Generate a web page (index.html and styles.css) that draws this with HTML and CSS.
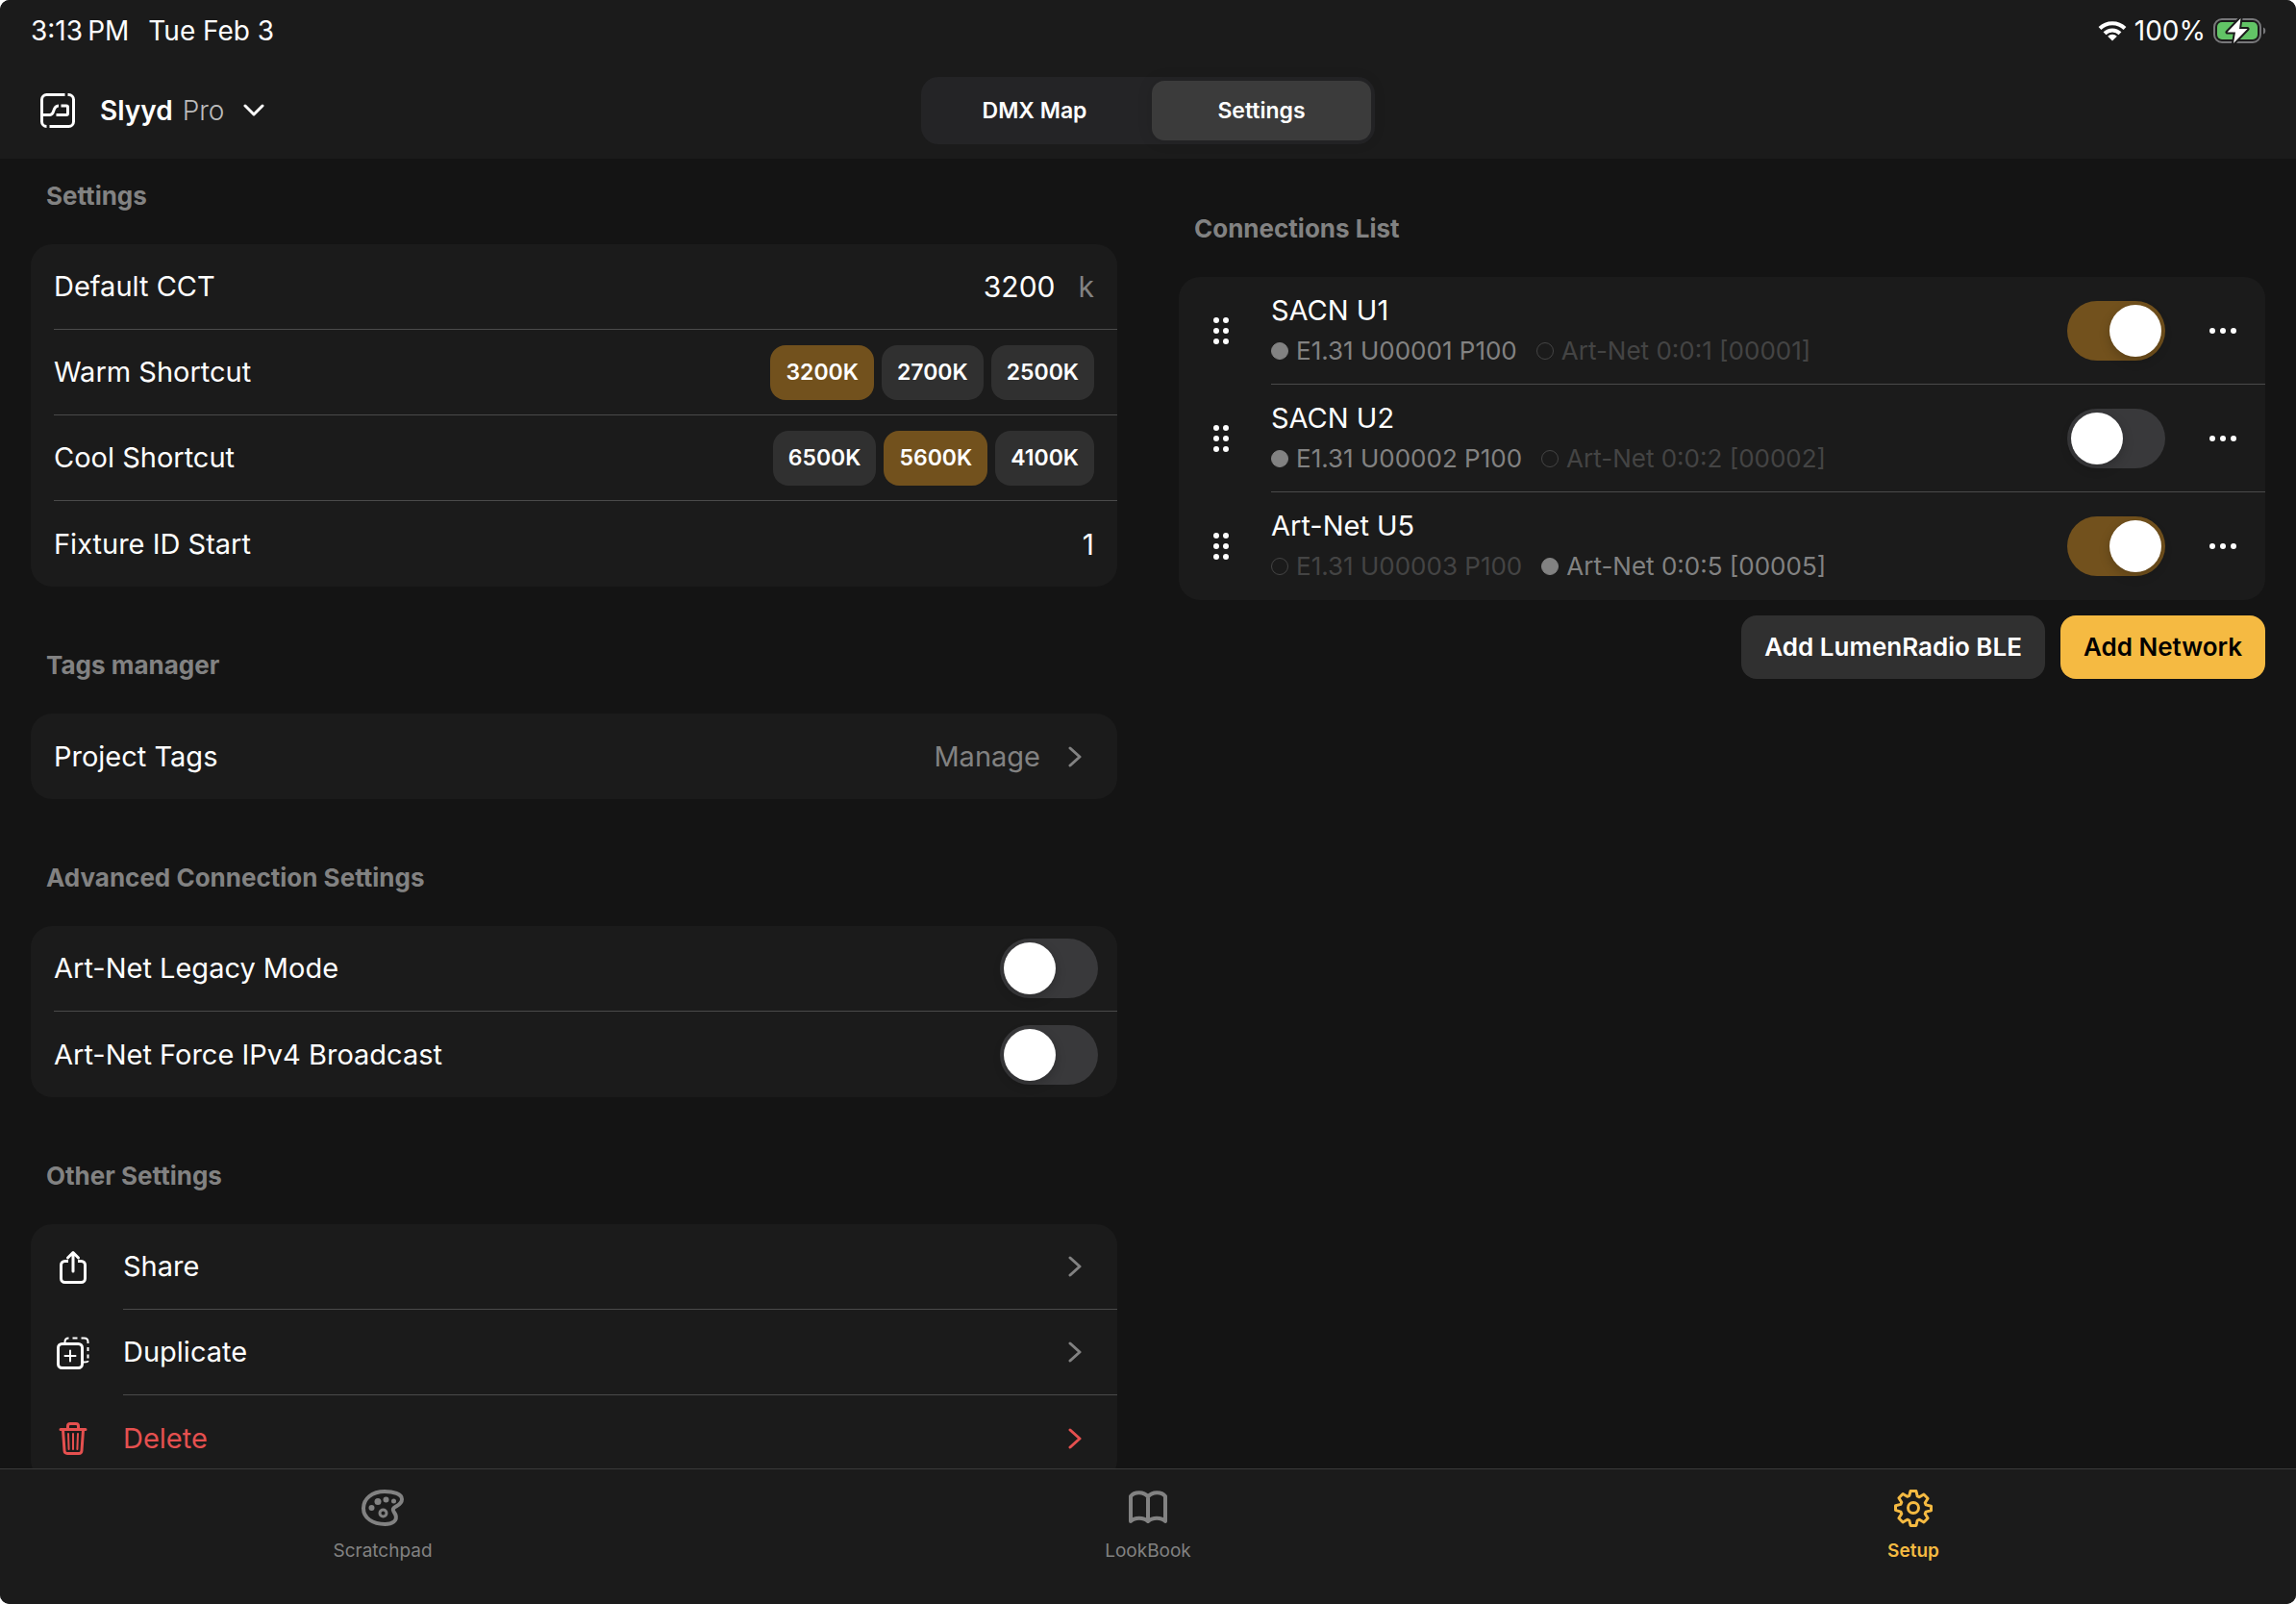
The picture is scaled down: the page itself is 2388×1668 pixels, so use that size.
FILE: index.html
```html
<!DOCTYPE html>
<html lang="en">
<head>
<meta charset="utf-8">
<meta name="viewport" content="width=device-width, initial-scale=1">
<title>Slyyd Pro – Setup</title>
<link rel="stylesheet" href="styles.css">
</head>
<body>
<svg class="defs" aria-hidden="true">
  <symbol id="chevron" viewBox="0 0 16 22"><path d="M3 2l10 9-10 9" fill="none" stroke="currentColor" stroke-width="3" stroke-linecap="round" stroke-linejoin="round"/></symbol>
  <symbol id="grip" viewBox="0 0 16 28"><g fill="currentColor"><circle cx="3" cy="3" r="3"/><circle cx="13" cy="3" r="3"/><circle cx="3" cy="14" r="3"/><circle cx="13" cy="14" r="3"/><circle cx="3" cy="25" r="3"/><circle cx="13" cy="25" r="3"/></g></symbol>
  <symbol id="more" viewBox="0 0 28 6"><g fill="currentColor"><circle cx="3" cy="3" r="3"/><circle cx="14" cy="3" r="3"/><circle cx="25" cy="3" r="3"/></g></symbol>
</svg>
<div class="app">
  <header class="top">
    <div class="status">
      <div class="status-left"><span>3:13&#8201;PM</span><span>Tue Feb 3</span></div>
      <div class="status-right">
        <svg class="wifi" width="30" height="22" viewBox="0 0 30 22" aria-hidden="true"><g fill="none" stroke="#fff" stroke-width="4"><path d="M2 8.500a18.500 18.500 0 0 1 26 0"/><path d="M7 13.700a11.500 11.500 0 0 1 16 0"/></g><path d="M15 21.500l-4.800-4.800a7 7 0 0 1 9.600 0z" fill="#fff"/></svg>
        <span>100%</span>
        <svg class="battery" width="56" height="30" viewBox="0 0 56 30" aria-hidden="true"><rect x="1" y="3" width="48" height="24" rx="8" fill="none" stroke="#77777a" stroke-width="2"/><rect x="4" y="6" width="42" height="18" rx="5" fill="#62c466"/><path d="M52 11.500c3 .8 3 6.200 0 7z" fill="#77777a"/><path d="M28.500 2L14.500 16.500h8.500L21 28l14.500-15H27z" fill="#fff" stroke="#1b1b1b" stroke-width="4" stroke-linejoin="round" paint-order="stroke"/></svg>
      </div>
    </div>
    <div class="nav">
      <button class="project" type="button">
        <svg width="36" height="36" viewBox="0 0 36 36" fill="none" stroke="#fff" stroke-width="3" aria-hidden="true"><path d="M25.500 1.500H6.500a5 5 0 0 0-5 5v23a5 5 0 0 0 5 5"/><path d="M28.500 1.500h1a5 5 0 0 1 5 5v23a5 5 0 0 1-5 5H9.500"/><path d="M1.500 22.500h8.500c5.500 0 2-9.500 9-9.500"/><path d="M21.500 13H27q1.500 0 1.500 1.500v6.500q0 1.500-1.500 1.500H16.500"/></svg>
        <strong>Slyyd</strong> <span class="plan">Pro</span>
        <svg width="22" height="14" viewBox="0 0 22 14" aria-hidden="true"><path d="M2 2l9 9 9-9" fill="none" stroke="#fff" stroke-width="3" stroke-linecap="round" stroke-linejoin="round"/></svg>
      </button>
      <div class="segmented">
        <button type="button" class="segment">DMX Map</button>
        <button type="button" class="segment selected">Settings</button>
      </div>
    </div>
  </header>

  <main class="content">
    <div class="column">
      <section class="group">
        <h2>Settings</h2>
        <div class="card">
          <div class="row"><label for="cct">Default CCT</label><span class="value"><input id="cct" class="field" type="text" value="3200"><span class="unit">k</span></span></div>
          <div class="row"><span>Warm Shortcut</span><span class="chips"><button type="button" class="chip on">3200K</button><button type="button" class="chip">2700K</button><button type="button" class="chip">2500K</button></span></div>
          <div class="row"><span>Cool Shortcut</span><span class="chips"><button type="button" class="chip">6500K</button><button type="button" class="chip on">5600K</button><button type="button" class="chip">4100K</button></span></div>
          <div class="row"><label for="fid">Fixture ID Start</label><span class="value"><input id="fid" class="field" type="text" value="1"></span></div>
        </div>
      </section>
      <section class="group">
        <h2>Tags manager</h2>
        <div class="card">
          <button type="button" class="row link"><span>Project Tags</span><span class="trail">Manage<svg class="chev"><use href="#chevron"/></svg></span></button>
        </div>
      </section>
      <section class="group">
        <h2>Advanced Connection Settings</h2>
        <div class="card">
          <div class="row switch-row"><label for="legacy">Art-Net Legacy Mode</label><input id="legacy" class="toggle" type="checkbox"></div>
          <div class="row switch-row"><label for="ipv4">Art-Net Force IPv4 Broadcast</label><input id="ipv4" class="toggle" type="checkbox"></div>
        </div>
      </section>
      <section class="group">
        <h2>Other Settings</h2>
        <div class="card">
          <div class="item">
            <svg class="item-icon" width="36" height="36" viewBox="0 0 36 36" fill="none" stroke="currentColor" stroke-width="3" stroke-linecap="round" stroke-linejoin="round" aria-hidden="true"><path d="M13 11.500H9.500a4 4 0 0 0-4 4v14a4 4 0 0 0 4 4h17a4 4 0 0 0 4-4v-14a4 4 0 0 0-4-4H23" stroke-linecap="butt"/><path d="M18 22V3M12.500 8L18 2.500 23.500 8"/></svg>
            <button type="button" class="row link"><span>Share</span><svg class="chev"><use href="#chevron"/></svg></button>
          </div>
          <div class="item">
            <svg class="item-icon" width="36" height="36" viewBox="0 0 36 36" fill="none" stroke="currentColor" stroke-width="3" aria-hidden="true"><rect x="2.500" y="8.500" width="25" height="25" rx="4"/><path d="M9.500 21h11M15 15.500v11" stroke-width="2" stroke-linecap="round"/><path d="M9.500 8V6.500q0-4 4-4M17.500 2.500h5M26.500 2.500h3q4 0 4 4v1.500M33.500 12v4M33.500 19.500v4M33.500 26q0 1.500-4.500 1.500" stroke-width="2"/></svg>
            <button type="button" class="row link"><span>Duplicate</span><svg class="chev"><use href="#chevron"/></svg></button>
          </div>
          <div class="item danger">
            <svg class="item-icon" width="36" height="36" viewBox="0 0 36 36" fill="none" stroke="currentColor" stroke-width="3" stroke-linecap="round" stroke-linejoin="round" aria-hidden="true"><path d="M5 8.500h26M7.500 9l1.500 21.500q.2 3 3 3h12q2.800 0 3-3L28.500 9M12.500 8V5q0-2.500 2.500-2.500h6q2.500 0 2.500 2.500v3"/><path d="M13 13l.6 16M18 13v16M23 13l-.6 16" stroke-width="2"/></svg>
            <button type="button" class="row link"><span>Delete</span><svg class="chev"><use href="#chevron"/></svg></button>
          </div>
        </div>
      </section>
    </div>

    <div class="column connections">
      <section class="group">
        <h2>Connections List</h2>
        <div class="card">
          <div class="conn">
            <svg class="grip"><use href="#grip"/></svg>
            <div class="conn-body">
              <div class="conn-text"><label for="c1">SACN U1</label><div class="protocols"><span class="proto active">E1.31 U00001 P100</span><span class="proto">Art-Net 0:0:1 [00001]</span></div></div>
              <input id="c1" class="toggle" type="checkbox" checked>
              <button type="button" class="more" aria-label="More"><svg width="28" height="6"><use href="#more"/></svg></button>
            </div>
          </div>
          <div class="conn">
            <svg class="grip"><use href="#grip"/></svg>
            <div class="conn-body">
              <div class="conn-text"><label for="c2">SACN U2</label><div class="protocols"><span class="proto active">E1.31 U00002 P100</span><span class="proto">Art-Net 0:0:2 [00002]</span></div></div>
              <input id="c2" class="toggle" type="checkbox">
              <button type="button" class="more" aria-label="More"><svg width="28" height="6"><use href="#more"/></svg></button>
            </div>
          </div>
          <div class="conn">
            <svg class="grip"><use href="#grip"/></svg>
            <div class="conn-body">
              <div class="conn-text"><label for="c3">Art-Net U5</label><div class="protocols"><span class="proto">E1.31 U00003 P100</span><span class="proto active">Art-Net 0:0:5 [00005]</span></div></div>
              <input id="c3" class="toggle" type="checkbox" checked>
              <button type="button" class="more" aria-label="More"><svg width="28" height="6"><use href="#more"/></svg></button>
            </div>
          </div>
        </div>
        <div class="actions"><button type="button" class="btn">Add LumenRadio BLE</button><button type="button" class="btn primary">Add Network</button></div>
      </section>
    </div>
  </main>

  <nav class="tabs">
    <a class="tab" href="#scratchpad">
      <svg width="44" height="40" viewBox="0 0 44 40" fill="none" stroke="currentColor" stroke-width="4" aria-hidden="true"><path d="M24 3C11 3 2 10.500 2 20.500S11.500 37 24.500 37c7.500 0 13-3.500 11-9.500-1-3-3.500-4.500-2.500-6.500 1.500-3 9-3.500 9-10C42 5.500 33 3 24 3z"/><circle cx="22.500" cy="25.500" r="3.500" stroke-width="3"/><g fill="currentColor" stroke="none"><circle cx="10.500" cy="20" r="3"/><circle cx="17" cy="13.500" r="3.500"/><circle cx="25.500" cy="11.500" r="3"/><circle cx="33.500" cy="13" r="2.500"/></g></svg>
      <span>Scratchpad</span>
    </a>
    <a class="tab" href="#lookbook">
      <svg width="44" height="40" viewBox="0 0 44 40" fill="none" stroke="currentColor" stroke-width="4" stroke-linejoin="round" aria-hidden="true"><path d="M22 8.500C17.500 3 8 3 4 8v26c4-4.500 13.500-4.500 18 0 4.500-4.500 14-4.500 18 0V8C36 3 26.500 3 22 8.500zV34"/></svg>
      <span>LookBook</span>
    </a>
    <a class="tab current" href="#setup">
      <svg width="40" height="40" viewBox="0 0 40 40" fill="none" stroke="currentColor" stroke-width="3" stroke-linejoin="round" aria-hidden="true"><path d="M17.100 2.500h5.800l1.300 5.400q1.100.4 2.100.9l4.600-2.800 4.200 4.200-2.900 4.600q.5 1 .9 2.100l5.400 1.300v4.600l-5.400 1.300q-.4 1.100-.9 2.100l2.900 4.600-4.200 4.200-4.600-2.800q-1 .5-2.100.9l-1.300 5.400h-5.800l-1.300-5.400q-1.100-.4-2.100-.9l-4.600 2.800-4.200-4.200 2.900-4.600q-.5-1-.9-2.100L1.500 22.300v-4.600l5.400-1.300q.4-1.100.9-2.100l-2.900-4.600 4.200-4.200 4.600 2.800q1-.5 2.100-.9z"/><circle cx="20" cy="20" r="5.500"/></svg>
      <span>Setup</span>
    </a>
  </nav>
</div>
</body>
</html>
```
FILE: styles.css
```css
:root {
  --bg: #141414;
  --surface: #1b1b1b;
  --control: #303030;
  --line: #4a4a4a;
  --text: #fff;
  --muted: #828282;
  --dim: #444;
  --accent: #f5ba42;
  --accent-dark: #72511d;
  --danger: #e5504f;
}
* { box-sizing: border-box; }
body {
  margin: 0;
  background: #fff;
  color: var(--text);
  font: 400 29px/36px Inter, "Liberation Sans", sans-serif;
}
button, input { font: inherit; color: inherit; margin: 0; }
button { border: 0; background: none; padding: 0; cursor: pointer; }
.defs { display: none; }
.app {
  display: flex;
  flex-direction: column;
  height: 100vh;
  overflow: hidden;
  border-radius: 10px;
  background: var(--bg);
}

/* Header */
.top { background: var(--surface); flex: none; }
.status {
  display: flex;
  justify-content: space-between;
  height: 64px;
  padding: 0 30px 0 32px;
  font-size: 28px;
}
.status-left, .status-right { display: flex; align-items: center; }
.status-left { gap: 20px; }
.status-right { gap: 8px; }
.nav {
  display: grid;
  grid-template-columns: 1fr auto 1fr;
  align-items: center;
  height: 101px;
  padding: 0 42px;
}
.project { display: flex; align-items: center; justify-self: start; font-size: 28px; }
.project strong { margin-left: 26px; font-weight: 600; }
.plan { margin: 0 20px 0 10px; color: #bbb; font-weight: 300; }
.segmented {
  display: grid;
  grid-template-columns: 1fr 1fr;
  gap: 8px;
  width: 472px;
  height: 70px;
  padding: 4px;
  border-radius: 18px;
  background: #242426;
}
.segment { border-radius: 13px; font-size: 23px; font-weight: 600; }
.segment.selected { background: #3b3b3b; box-shadow: 0 0 16px rgba(0, 0, 0, .12); }

/* Settings groups */
.content {
  flex: 1;
  min-height: 0;
  overflow: hidden;
  display: grid;
  grid-template-columns: 1fr 1fr;
  gap: 64px;
  padding: 0 32px;
}
.column { min-width: 0; }
h2 {
  margin: 60px 16px 28px;
  color: var(--muted);
  font-size: 26px;
  font-weight: 700;
  line-height: 44px;
}
.group:first-child h2 { margin-top: 17px; }
.connections .group:first-child h2 { margin-top: 51px; }
.card { border-radius: 22px; background: var(--surface); }
.row {
  display: flex;
  align-items: center;
  justify-content: space-between;
  height: 89px;
  margin-left: 24px;
  padding-right: 24px;
  border-bottom: 1px solid var(--line);
}
.card > :last-child, .item:last-child .row { border-bottom: 0; }
.value { display: flex; gap: 24px; font-size: 30px; }
.field { width: 120px; padding: 0; border: 0; background: none; text-align: right; }
.unit { color: var(--muted); }
.chips { display: flex; gap: 8px; }
.chip {
  height: 57px;
  padding: 0 16px;
  border-radius: 16px;
  background: var(--control);
  font-size: 23px;
  font-weight: 600;
}
.chip.on { background: var(--accent-dark); }
.link { width: calc(100% - 24px); padding-right: 36px; border-radius: 0; text-align: left; }
.trail { display: flex; align-items: center; gap: 28px; color: var(--muted); }
.chev { width: 16px; height: 22px; color: var(--muted); }
.switch-row { padding-right: 20px; }
.item { display: flex; align-items: center; padding-left: 26px; }
.item-icon { flex: none; }
.item .row { flex: 1; margin-left: 34px; }
.danger, .danger .chev { color: var(--danger); }

.toggle {
  appearance: none;
  flex: none;
  width: 102px;
  height: 62px;
  padding: 4px;
  border-radius: 31px;
  background: #39393b;
}
.toggle::before {
  content: "";
  display: block;
  width: 54px;
  height: 54px;
  border-radius: 50%;
  background: #fff;
  box-shadow: 0 4px 12px rgba(0, 0, 0, .2);
}
.toggle:checked { background: var(--accent-dark); }
.toggle:checked::before { margin-left: auto; }

/* Connections */
.conn { display: flex; align-items: center; padding-left: 36px; }
.grip { flex: none; width: 16px; height: 28px; }
.conn-body {
  flex: 1;
  display: flex;
  align-items: center;
  height: 112px;
  margin-left: 44px;
  padding-right: 30px;
  border-bottom: 1px solid var(--line);
}
.conn:last-child .conn-body { border-bottom: 0; }
.conn-text { flex: 1; }
.protocols { display: flex; gap: 20px; margin-top: 6px; font-size: 26px; }
.proto { display: flex; align-items: center; gap: 8px; color: var(--dim); }
.proto::before {
  content: "";
  width: 16px;
  height: 16px;
  border: 1px solid currentColor;
  border-radius: 50%;
}
.proto.active { color: var(--muted); }
.proto.active::before { background: currentColor; }
.more { display: flex; align-items: center; height: 62px; margin-left: 46px; }
.actions { display: flex; justify-content: flex-end; gap: 16px; margin-top: 16px; }
.btn {
  height: 66px;
  padding: 0 24px;
  border-radius: 16px;
  background: var(--control);
  font-size: 26px;
  font-weight: 600;
}
.btn.primary { background: var(--accent); color: #000; }

/* Tab bar */
.tabs {
  flex: none;
  display: grid;
  grid-template-columns: repeat(3, 1fr);
  height: 141px;
  border-top: 1px solid #3a3a3a;
  background: var(--surface);
}
.tab {
  display: flex;
  flex-direction: column;
  align-items: center;
  gap: 13px;
  padding-top: 20px;
  color: var(--muted);
  font-size: 19px;
  line-height: 24px;
  text-decoration: none;
}
.tab.current { color: var(--accent); font-weight: 600; }
```
